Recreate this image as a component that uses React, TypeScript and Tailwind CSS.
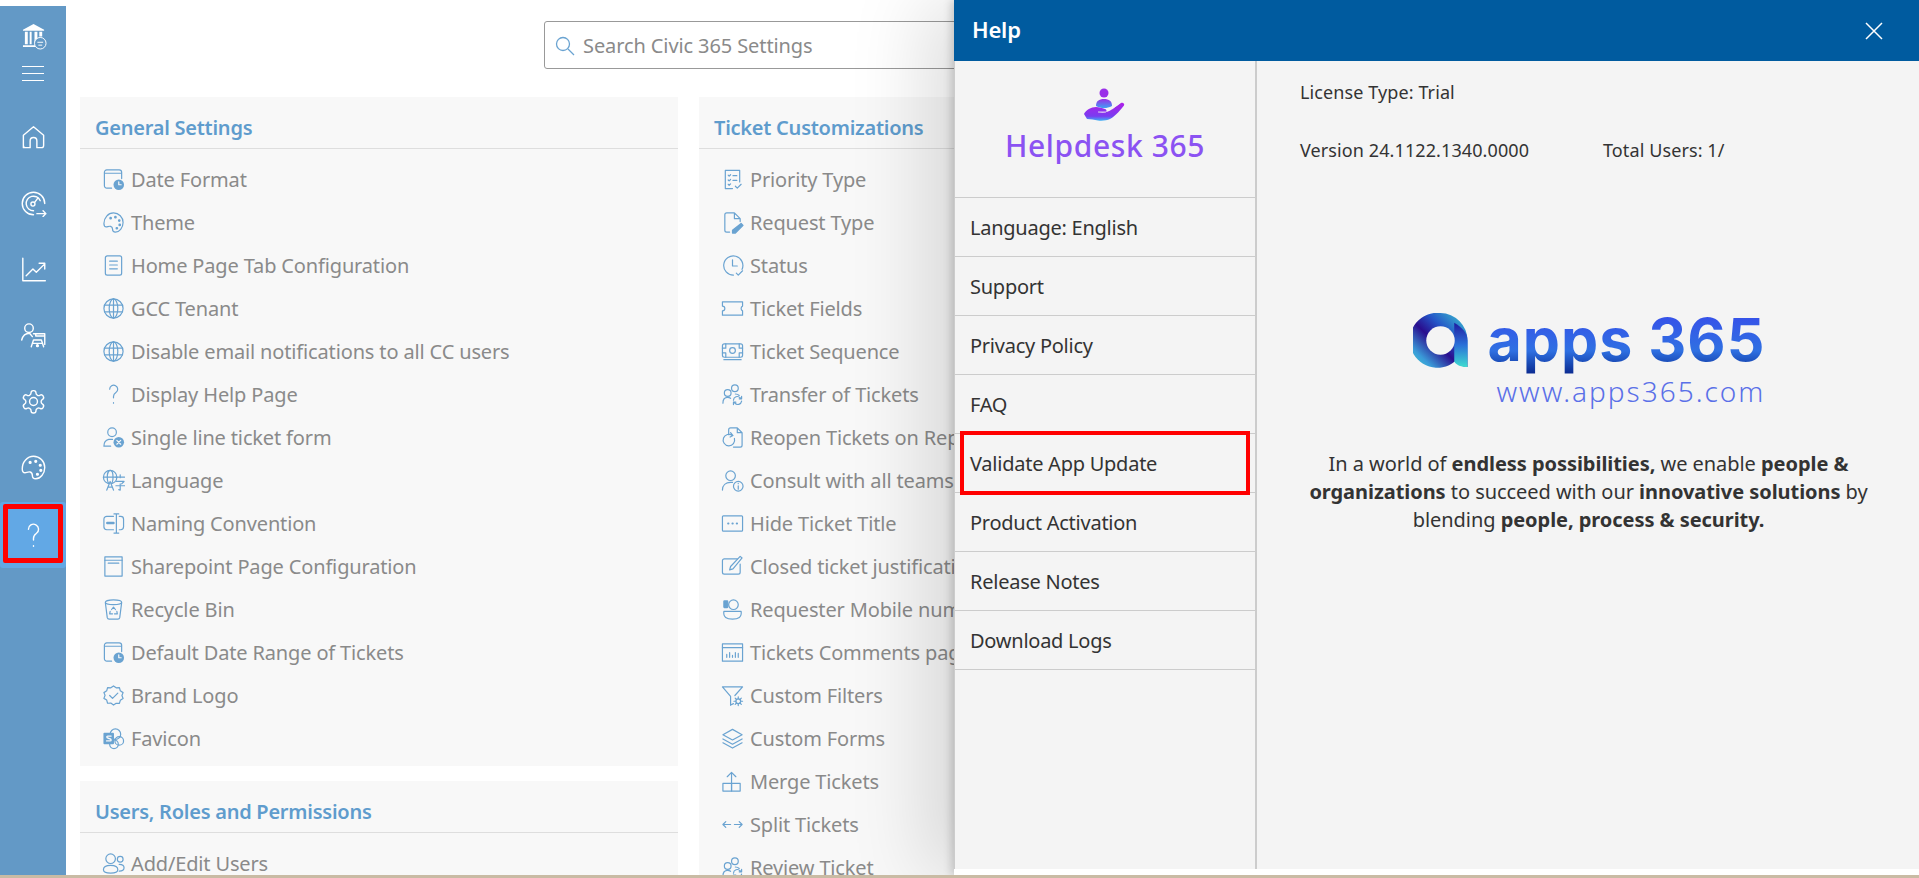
import type { ReactNode } from "react";

type IconProps = { children: ReactNode; className?: string };

function Ico({ children, className = "h-[23px] w-[23px] text-[#6aa3d1]" }: IconProps) {
  return (
    <svg viewBox="0 0 24 24" fill="none" stroke="currentColor" strokeWidth="1.25" strokeLinecap="round" strokeLinejoin="round" className={`shrink-0 ${className}`} aria-hidden="true">
      {children}
    </svg>
  );
}

const globe = (
  <>
    <circle cx="12" cy="12" r="10" />
    <ellipse cx="12" cy="12" rx="4.5" ry="10" />
    <path d="M2.6 8.5h18.8M2.6 15.5h18.8M12 2v20" />
  </>
);

const calendarClock = (
  <>
    <path d="M10 21H5a2.5 2.5 0 0 1-2.5-2.5v-14A2.5 2.5 0 0 1 5 2h13a2.5 2.5 0 0 1 2.5 2.5V11M2.5 5.5h18" />
    <circle cx="17.5" cy="17.5" r="5.5" fill="currentColor" stroke="none" />
    <path d="M17.5 14.5v3h2.5" stroke="#f8f8f8" />
  </>
);

const palette = (
  <>
    <path d="M12 2a10 10 0 0 1 10 10c0 5.5-4 10-8 10-2 0-3-1.3-3-3 0-1.500-.6-2.500-2-3-1.500-.5-3.300.6-4.500.6C2.800 16.600 2 15.500 2 13 2 7 6.500 2 12 2z" />
    <circle cx="9" cy="7.500" r=".8" fill="currentColor" />
    <circle cx="14" cy="6.500" r=".8" fill="currentColor" />
    <circle cx="18" cy="10" r=".8" fill="currentColor" />
    <circle cx="18.500" cy="14.500" r=".8" fill="currentColor" />
    <circle cx="15.500" cy="18" r=".8" fill="currentColor" />
  </>
);

const transfer = (
  <>
    <circle cx="14.500" cy="5.500" r="3.500" />
    <circle cx="7" cy="10.500" r="3.500" />
    <path d="M2 21c0-3.500 2-6 5-6 1.200 0 2 .3 3 1M15 11.500c1.500 0 3 .5 4 1.500" />
    <path d="M13 18a4 4 0 0 1 7-2.500l1.500 1M21.500 14v2.500H19M21.500 19a4 4 0 0 1-7 2l-1.500-1M13 22.500V20h2.500" />
  </>
);

const generalSettings: [string, ReactNode][] = [
  ["Date Format", calendarClock],
  ["Theme", palette],
  ["Home Page Tab Configuration", <><rect x="3.500" y="2" width="17" height="20" rx="2" /><path d="M8 7.500h8M8 11.500h8M8 15.500h8" /></>],
  ["GCC Tenant", globe],
  ["Disable email notifications to all CC users", globe],
  ["Display Help Page", <path d="M8 6.500a4.200 4.200 0 1 1 6.500 3.500c-1.500 1-2.500 2-2.500 4v1.500M12 20.500v.5" />],
  ["Single line ticket form", <><circle cx="10.500" cy="6.500" r="4.500" /><path d="M2 21c0-3 1-6 5-7h4M2 21h7" /><circle cx="17.500" cy="17" r="5.500" fill="currentColor" stroke="none" /><path d="M15.500 15l4 4M19.500 15l-4 4" stroke="#f8f8f8" /></>],
  ["Language", <><circle cx="8.500" cy="8.500" r="7" /><ellipse cx="8.500" cy="8.500" rx="3" ry="7" /><path d="M1.500 8.500h14" /><path d="M5 22l3.500-9 3.500 9M6.200 19h4.600M14.500 8.500h9M19 6v3M15 13h8l-2.500 2.500M19 15.500V22l-1.500-.5M14.500 17.500h9" fill="#f8f8f8" /></>],
  ["Naming Convention", <><path d="M12 4.500H5A3 3 0 0 0 2 7.500v8A3 3 0 0 0 5 18.500h7M18 4.500h1.500a3 3 0 0 1 3 3v8a3 3 0 0 1-3 3H18M15 2v20M12.500 2h5M12.500 22h5" /><path d="M5.500 11.500h6.500" strokeWidth="2.500" /></>],
  ["Sharepoint Page Configuration", <><rect x="3" y="2" width="18" height="20" /><path d="M3 5.500h18M6.500 8.500h11" /></>],
  ["Recycle Bin", <><path d="M3.500 5l2 15.500a2 2 0 0 0 2 1.500h9a2 2 0 0 0 2-1.500L20.500 5" /><ellipse cx="12" cy="4.500" rx="8.500" ry="2.500" /><path d="M10 12l2-2.500 2 2.500M15.500 14l.5 2.500h-3M8.500 14l-.5 2.500h3" /></>],
  ["Default Date Range of Tickets", calendarClock],
  ["Brand Logo", <><path d="M12 2l2.800 2 3.400-.2.900 3.300 2.900 1.900-1.200 3 1.200 3.200-2.900 1.800-.9 3.300-3.400-.2L12 22l-2.800-2.100-3.400.2-.9-3.300L2 15l1.200-3.200L2 9l2.900-1.900.9-3.300 3.400.2z" /><path d="M8 12l3 3 5.500-5.500" /></>],
  ["Favicon", <><circle cx="14" cy="7.500" r="5.500" /><circle cx="18" cy="14.500" r="4.500" /><circle cx="12.500" cy="18" r="4.500" /><rect x="1.500" y="6" width="11" height="12" rx="1" fill="currentColor" stroke="none" /><path d="M9.500 9.500H6a1 1 0 0 0-1 1c0 2 4.500 1 4.500 3a1 1 0 0 1-1 1H4.800" stroke="#f8f8f8" strokeWidth="1.500" /></>],
];

const ticketCustomizations: [string, ReactNode][] = [
  ["Priority Type", <><path d="M12 21.500H4.500v-19h15v12" /><path d="M7.500 7.500l1 1 1.500-1.500M12.500 8h4M7.500 12.500l1 1 1.500-1.500M12.500 13h4M7.500 17l1 1 1.500-1.500M15 19l2 2 4-4" /></>],
  ["Request Type", <><path d="M9 22H6a2 2 0 0 1-2-2V4a2 2 0 0 1 2-2h8l6 6v3M14 2v6h6" /><path d="M21 13l2 2-8 8h-3v-3z" fill="currentColor" /></>],
  ["Status", <><path d="M13 22a10 10 0 1 1 9-6" /><path d="M12 6v6.500h5M16 20l2 2 4.500-4.500" /></>],
  ["Ticket Fields", <path d="M1.500 5h21v4.500a2.500 2.500 0 0 0-1.500 2.500 2.500 2.500 0 0 0 1.500 2.500V19h-21v-4.500A2.500 2.500 0 0 0 4 12a2.500 2.500 0 0 0-2.500-2.500z" />],
  ["Ticket Sequence", <><rect x="1.500" y="4" width="21" height="14" rx="2" /><circle cx="12" cy="11" r="3" /><path d="M1.500 8.500H5V4M22.500 8.500H19V4M1.500 13.500H5V18M22.500 13.500H19V18M3 20.500h18" /></>],
  ["Transfer of Tickets", transfer],
  ["Reopen Tickets on Reply", <><path d="M8 9V4a2 2 0 0 1 2-2h7l5 5v13a2 2 0 0 1-2 2h-7M17 2v5h5" /><path d="M14 13a6 6 0 1 1-2-3M10 7l2.500 3-3 1.500" /></>],
  ["Consult with all teams", <><circle cx="10" cy="7" r="5" /><path d="M1.500 22c0-5 3.500-8 8.500-8h2" /><circle cx="18" cy="18" r="5" /><path d="M18 17.500V21M18 15v.3" /></>],
  ["Hide Ticket Title", <><rect x="1.500" y="4" width="21" height="16" rx="1" /><path d="M7.500 12h.2M12 12h.2M16.500 12h.2" strokeWidth="2.200" /></>],
  ["Closed ticket justification", <><path d="M20 9.500V18a2 2 0 0 1-2 2H3.500a2 2 0 0 1-2-2V6a2 2 0 0 1 2-2H17" /><path d="M22 3l-2-1.500L10 12l-1 3.500 3.500-1z" /></>],
  ["Requester Mobile number", <><circle cx="13" cy="7" r="5" /><path d="M3 14c-1 6 3 8 9 8s10-2 9-8z" /><rect x="3" y="3" width="4" height="7" rx=".5" fill="currentColor" /></>],
  ["Tickets Comments page", <><rect x="1.500" y="3" width="21" height="18" /><path d="M1.500 7h21M6 17v-3M9 17v-5M12 17v-2M15 17v-5M18 17v-4" /></>],
  ["Custom Filters", <><path d="M1.500 3h21l-8 9M10 22V13L1.500 3" /><path d="M10 22l3-1.500" /><circle cx="18" cy="18" r="2.500" /><path d="M18 13.500v2M18 20.500v2M13.500 18h2M20.500 18h2M14.800 14.800l1.400 1.400M19.800 19.800l1.400 1.400M14.800 21.200l1.400-1.400M19.800 16.200l1.400-1.400" /></>],
  ["Custom Forms", <><path d="M12 2.500l10 5.500-10 5.500L2 8z" /><path d="M2 12.500l10 5.500 10-5.500M2 16.500l10 5.500 10-5.500" /></>],
  ["Merge Tickets", <><rect x="2" y="14" width="9" height="8" /><rect x="11" y="14" width="9" height="8" /><path d="M11 14V2.500M6.500 7L11 2.500 15.500 7" /></>],
  ["Split Tickets", <path d="M10 12H2M5 9l-3 3 3 3M14 12h8M19 9l3 3-3 3" />],
  ["Review Ticket", transfer],
];

const users: [string, ReactNode][] = [
  ["Add/Edit Users", <><circle cx="9" cy="7" r="5" /><circle cx="19" cy="7.500" r="3" /><path d="M9 14c-4 0-7.500 1.500-7.500 4.500S4 22 9 22s7.500-.5 7.500-3.500S13 14 9 14zM18 13c3 0 5 1.500 5 3.500S21 20 18 20" /></>],
];

const helpLinks = ["Language: English", "Support", "Privacy Policy", "FAQ", "Validate App Update", "Product Activation", "Release Notes", "Download Logs"];

function SettingsCard({ title, rows }: { title: string; rows: [string, ReactNode][] }) {
  return (
    <section className="bg-[#f8f8f8] pb-[6px]">
      <h2 className="flex h-[52px] items-center border-b border-[#dedede] pt-[10px] pl-[15px] text-[20px] leading-none font-semibold tracking-[-0.25px] text-[#5f9ccd]">{title}</h2>
      <ul className="pt-[9px]">
        {rows.map(([label, icon]) => (
          <li key={label} className="flex h-[43px] items-center gap-[6px] pl-[22px] text-[20px] tracking-[-0.15px] whitespace-nowrap text-[#8a8a8a]">
            <Ico>{icon}</Ico>
            <span>{label}</span>
          </li>
        ))}
      </ul>
    </section>
  );
}

function SideIcon({ children }: { children: ReactNode }) {
  return (
    <div className="flex h-[66px] items-center justify-center text-white">
      <Ico className="h-[27px] w-[27px]">{children}</Ico>
    </div>
  );
}

function Sidebar() {
  return (
    <aside className="mt-[6px] flex w-[66px] shrink-0 flex-col bg-[#6399c6]">
      <div className="flex h-[98px] flex-col items-center pt-[17px] text-white">
        <svg viewBox="0 0 26 28" className="ml-[3px] h-[27px] w-[25px]" aria-hidden="true">
          <path d="M1 7L12 1l11 6v1H1zM3 9h3v13H3zM8 9h2v13H8zM13 9h3v11h-3zM18 9h3v5h-3zM1 23h13v2H1z" fill="currentColor" />
          <circle cx="19" cy="21" r="6" fill="#6399c6" stroke="currentColor" strokeWidth="1" />
          <path d="M16 20h6M17 23h4" stroke="currentColor" strokeWidth="1" />
        </svg>
        <div className="mt-[16px] flex w-[22px] flex-col gap-[6px]">
          <div className="h-px bg-white" />
          <div className="h-px bg-white" />
          <div className="h-px bg-white" />
        </div>
      </div>
      <SideIcon><path d="M3 21V10l9-7.500L21 10v9a2 2 0 0 1-2 2h-4v-6a3 3 0 0 0-6 0v6H5a2 2 0 0 1-2-2" /></SideIcon>
      <SideIcon><><path d="M12 22a10 10 0 1 1 10-10M12 18.500a6.500 6.500 0 1 1 6-9" /><circle cx="11.500" cy="12.500" r="1.800" /><path d="M13 11l3-4M15 21h8M20.500 18.500L23 21l-2.500 2.500" /></></SideIcon>
      <SideIcon><path d="M2.500 2v20h20M5.500 17.500l6-6 3 3 7.500-7.500M17 6.500h5v5" /></SideIcon>
      <SideIcon><><circle cx="8" cy="5.500" r="3.800" /><path d="M1.500 16c1-4 3.500-6 7-6l2.500 3" /><path d="M12 10.500h10V20M14 10.500v2h8M10 22l2-6h7l2 6M11 19h9" /><circle cx="15.500" cy="21" r=".8" fill="currentColor" /></></SideIcon>
      <SideIcon><><path d="M12.200 2.300h-.4a2 2 0 0 0-2 2v.2a2 2 0 0 1-1 1.700l-.4.300a2 2 0 0 1-2 0l-.2-.1a2 2 0 0 0-2.700.7l-.2.400a2 2 0 0 0 .7 2.700l.2.100a2 2 0 0 1 1 1.700v.5a2 2 0 0 1-1 1.700l-.2.100a2 2 0 0 0-.7 2.700l.2.400a2 2 0 0 0 2.700.7l.2-.1a2 2 0 0 1 2 0l.4.300a2 2 0 0 1 1 1.700v.2a2 2 0 0 0 2 2h.4a2 2 0 0 0 2-2v-.2a2 2 0 0 1 1-1.700l.4-.3a2 2 0 0 1 2 0l.2.100a2 2 0 0 0 2.700-.7l.2-.4a2 2 0 0 0-.7-2.700l-.2-.1a2 2 0 0 1-1-1.700v-.5a2 2 0 0 1 1-1.700l.2-.1a2 2 0 0 0 .7-2.700l-.2-.4a2 2 0 0 0-2.700-.7l-.2.1a2 2 0 0 1-2 0l-.4-.3a2 2 0 0 1-1-1.700v-.2a2 2 0 0 0-2-2z" /><circle cx="12" cy="12" r="3.500" /></></SideIcon>
      <SideIcon>{palette}</SideIcon>
      <div className="relative mt-[2px] flex h-[66px] items-center justify-center rounded-[3px] bg-[#62a8e5] text-white">
        <Ico className="h-[27px] w-[27px]"><path d="M7.500 6.500a4.500 4.500 0 1 1 7 3.700c-1.500 1-2.500 2.200-2.500 4.300v1.500M12 21v.5" /></Ico>
        <div className="absolute top-[2px] left-[3px] h-[59px] w-[60px] rounded-[2px] border-[5px] border-[#ff0000]" />
      </div>
    </aside>
  );
}

function HelpdeskLogo() {
  return (
    <div className="flex h-[137px] flex-col items-center border-b border-[#cccccc] pt-[27px]">
      <svg viewBox="0 0 44 34" className="h-[34px] w-[44px]" aria-hidden="true">
        <defs>
          <linearGradient id="hd-person" x1="0" y1="0" x2="0" y2="1">
            <stop offset="0" stopColor="#9a2fe8" />
            <stop offset="1" stopColor="#3fa0f5" />
          </linearGradient>
          <linearGradient id="hd-hand" x1="0" y1="0" x2="0" y2="1">
            <stop offset="0" stopColor="#b01fe8" />
            <stop offset=".75" stopColor="#7a3cf0" />
            <stop offset="1" stopColor="#3fb0f5" />
          </linearGradient>
        </defs>
        <circle cx="21" cy="5" r="4.500" fill="#9a2fe8" />
        <path d="M13 18c0-5 3-7 8-7s8 2 8 7c-3 1.500-5 2-8 2-3 0-5-.5-8-2z" fill="url(#hd-person)" />
        <path d="M1 26c2-4 7-7 12-7 3 0 6 1 9 2 2 .7 2 3 0 3h-7c6 1 10 0 13-2l10-7c2-1 4 1 3 2.500C38 21 33 28 27 31c-3 1.500-8 2-12 1.500-4-.5-7-1.500-11-1.500z" fill="url(#hd-hand)" />
        <path d="M15 24h8M29 21l8-6" stroke="#f4f4f4" strokeWidth=".8" />
      </svg>
      <div className="mt-[4px] text-[30px] leading-[40px] font-medium tracking-[0.6px] text-[#8b52f2]">Helpdesk 365</div>
    </div>
  );
}

function AppsLogo() {
  return (
    <div className="flex items-start justify-center pl-[2px]">
      <svg viewBox="0 0 56 56" className="mt-[5px] mr-[20px] h-[55px] w-[55px] shrink-0" aria-hidden="true">
        <defs>
          <linearGradient id="apps-ring" x1="1" y1="0" x2="0" y2="1">
            <stop offset="0" stopColor="#3fd0d0" />
            <stop offset=".35" stopColor="#2456c8" />
            <stop offset=".55" stopColor="#2a0e8e" />
            <stop offset=".8" stopColor="#3a9ad8" />
            <stop offset="1" stopColor="#40d8d0" />
          </linearGradient>
          <linearGradient id="apps-tail" x1="0" y1="0" x2="0" y2="1">
            <stop offset="0" stopColor="#1e1aa0" />
            <stop offset=".5" stopColor="#2a70d8" />
            <stop offset="1" stopColor="#3fdcd0" />
          </linearGradient>
        </defs>
        <path d="M28 0a28 28 0 0 1 27.500 28V55a18 18 0 0 1-13-5.500A28 28 0 1 1 28 0z" fill="url(#apps-ring)" fillRule="evenodd" />
        <path d="M42 10c8 5 13.500 10 13.500 18V55c-6 0-12-2-13.500-6z" fill="url(#apps-tail)" />
        <circle cx="28" cy="28" r="14.500" fill="#f4f4f4" />
      </svg>
      <div className="flex flex-col items-end">
        <div className="bg-gradient-to-b from-[#3848ea] via-[#2f70e2] via-65% to-[#0c2a90] bg-clip-text pb-[2px] font-['Inter'] text-[59px] leading-[64px] font-bold tracking-[1px] text-transparent">apps 365</div>
        <div className="text-[28px] leading-[34px] font-light tracking-[2px] text-[#5a70e8]">www.apps365.com</div>
      </div>
    </div>
  );
}

function HelpPanel() {
  return (
    <div className="absolute top-0 right-0 bottom-0 flex w-[965px] flex-col bg-white text-[#333333] shadow-[-3px_0_8px_rgba(0,0,0,0.16),-30px_0_70px_rgba(0,0,0,0.13)]">
      <header className="flex h-[61px] shrink-0 items-center justify-between bg-[#005b9f] pr-[36px] pb-[3px] pl-[18px] text-white">
        <span className="text-[22px] font-semibold tracking-[-0.2px]">Help</span>
        <svg viewBox="0 0 18 18" className="mt-[3px] h-[18px] w-[18px]" stroke="currentColor" strokeWidth="1.500" aria-hidden="true">
          <path d="M1 1l16 16M17 1L1 17" />
        </svg>
      </header>
      <div className="mb-[6px] flex min-h-0 flex-1 border-l border-[#cccccc] bg-[#f4f4f4]">
        <nav className="w-[302px] shrink-0 border-r-2 border-[#cccccc]">
          <HelpdeskLogo />
          {helpLinks.map((link) => (
            <div key={link} className="relative flex h-[59px] items-center border-b border-[#cccccc] pt-[2px] pl-[15px] text-[20px] tracking-[-0.25px]">
              {link}
              {link === "Validate App Update" && <div className="absolute -top-[3px] -bottom-[3px] left-[5px] w-[290px] border-[4px] border-[#ff0000]" />}
            </div>
          ))}
        </nav>
        <div className="flex-1">
          <div className="pt-[17px] pl-[43px] text-[18px] tracking-[0.1px]">
            <div className="leading-[28px]">License Type: Trial</div>
            <div className="mt-[30px] flex leading-[28px]">
              <span className="w-[303px]">Version 24.1122.1340.0000</span>
              <span>Total Users: 1/</span>
            </div>
          </div>
          <div className="mt-[144px]"><AppsLogo /></div>
          <p className="mt-[42px] pl-[1px] text-center text-[20px] leading-[28px] tracking-[-0.05px]">
            In a world of <b>endless possibilities,</b> we enable <b>people &amp;</b>
            <br />
            <b>organizations</b> to succeed with our <b>innovative solutions</b> by
            <br />
            blending <b>people, process &amp; security.</b>
          </p>
        </div>
      </div>
    </div>
  );
}

export default function App() {
  return (
    <div className="flex h-[878px] flex-col overflow-hidden bg-white font-['Noto_Sans',sans-serif]">
      <div className="relative flex min-h-0 flex-1">
        <Sidebar />
        <main className="min-w-0 flex-1 pl-[14px]">
          <div className="h-[97px] pt-[21px] pl-[464px]">
            <div className="flex h-[48px] w-[800px] items-center rounded-[3px] border border-[#999999] pt-[2px] pl-[10px] text-[20px] tracking-[-0.1px] text-[#8a8a8a]">
              <svg viewBox="0 0 20 20" fill="none" stroke="#6aa3d1" strokeWidth="1.300" className="h-[20px] w-[20px]" aria-hidden="true">
                <circle cx="8" cy="8" r="6.500" />
                <path d="M13 13l6 6" />
              </svg>
              <span className="ml-[8px]">Search Civic 365 Settings</span>
            </div>
          </div>
          <div className="grid w-[1300px] grid-cols-[598px_598px] gap-x-[21px]">
            <div className="flex flex-col gap-[15px]">
              <SettingsCard title="General Settings" rows={generalSettings} />
              <SettingsCard title="Users, Roles and Permissions" rows={users} />
            </div>
            <SettingsCard title="Ticket Customizations" rows={ticketCustomizations} />
          </div>
        </main>
        <HelpPanel />
      </div>
      <div className="relative z-10 h-[3px] shrink-0 bg-[#c9bba4]" />
    </div>
  );
}
